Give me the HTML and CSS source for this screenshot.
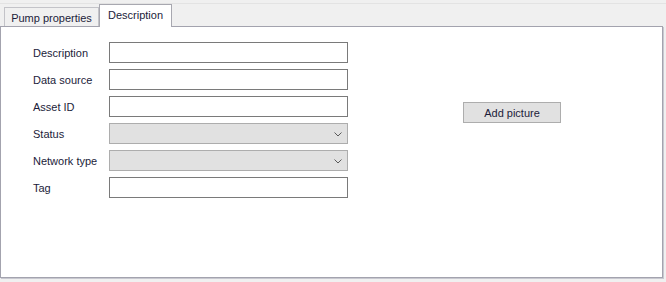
FILE: index.html
```html
<!DOCTYPE html>
<html>
<head>
<meta charset="utf-8">
<link rel="stylesheet" href="styles.css">
</head>
<body>
<div class="window">
  <div class="topline"></div>
  <div class="tabstrip">
    <div class="tab">Pump properties</div>
    <div class="tab active">Description</div>
  </div>
  <div class="panel">
    <div class="form">
      <label class="lbl">Description</label><div class="field"></div>
      <label class="lbl">Data source</label><div class="field"></div>
      <label class="lbl">Asset ID</label><div class="field"></div>
      <label class="lbl">Status</label>
      <div class="field combo"><svg class="chev" width="8" height="5" viewBox="0 0 8 5"><path d="M0.5 0.5 L4 4 L7.5 0.5" fill="none" stroke="#5a5a5a" stroke-width="1"/></svg></div>
      <label class="lbl">Network type</label>
      <div class="field combo"><svg class="chev" width="8" height="5" viewBox="0 0 8 5"><path d="M0.5 0.5 L4 4 L7.5 0.5" fill="none" stroke="#5a5a5a" stroke-width="1"/></svg></div>
      <label class="lbl">Tag</label><div class="field"></div>
    </div>
    <div class="side">
      <button class="btn">Add picture</button>
    </div>
  </div>
</div>
</body>
</html>
```
FILE: styles.css
```css
html, body {
  margin: 0;
  padding: 0;
  background: #f0f0f0;
}
body {
  font-family: "Liberation Sans", Arial, sans-serif;
  font-size: 11px;
  color: #1c1c3a;
}
.window {
  width: 666px;
  height: 282px;
  overflow: hidden;
}
.topline {
  height: 3px;
  border-bottom: 1px solid #e3e3e3;
}
.tabstrip {
  display: flex;
  align-items: flex-end;
  height: 22px;
  padding-left: 4px;
  position: relative;
  z-index: 2;
}
.tab {
  height: 19px;
  box-sizing: border-box;
  width: 95px;
  border: 1px solid #c3c3c8;
  border-bottom: none;
  background: #f0f0f0;
  display: flex;
  align-items: center;
  justify-content: center;
  padding-top: 1px;
}
.tab.active {
  width: 73px;
  height: 23px;
  margin-bottom: -1px;
  background: #fff;
  border-color: #a8a8b0;
  padding-top: 0;
  padding-bottom: 2px;
}
.panel {
  width: 663px;
  height: 252px;
  box-sizing: border-box;
  background: #fff;
  border: 1px solid #a3a3ae;
  box-shadow: 1px 1px 0 #c8c8d0;
  display: flex;
  align-items: flex-start;
  padding: 15px 0 0 32px;
  position: relative;
  z-index: 1;
}
.form {
  display: grid;
  grid-template-columns: 76px 239px;
  grid-auto-rows: 21px;
  row-gap: 6px;
  align-items: center;
}
.lbl {
  padding-top: 1px;
}
.field {
  height: 21px;
  box-sizing: border-box;
  border: 1px solid #7a7a7a;
  background: #fff;
}
.combo {
  border-color: #adadad;
  background: #e1e1e1;
  display: flex;
  align-items: center;
  justify-content: flex-end;
  padding-right: 5px;
}
.chev {
  display: block;
  margin-top: 1px;
}
.side {
  margin-left: 115px;
  margin-top: 60px;
}
.btn {
  width: 98px;
  height: 21px;
  box-sizing: border-box;
  border: 1px solid #adadad;
  background: #e1e1e1;
  font-family: "Liberation Sans", Arial, sans-serif;
  font-size: 11px;
  color: #1c1c3a;
  padding: 0;
  margin: 0;
  display: block;
}
```
